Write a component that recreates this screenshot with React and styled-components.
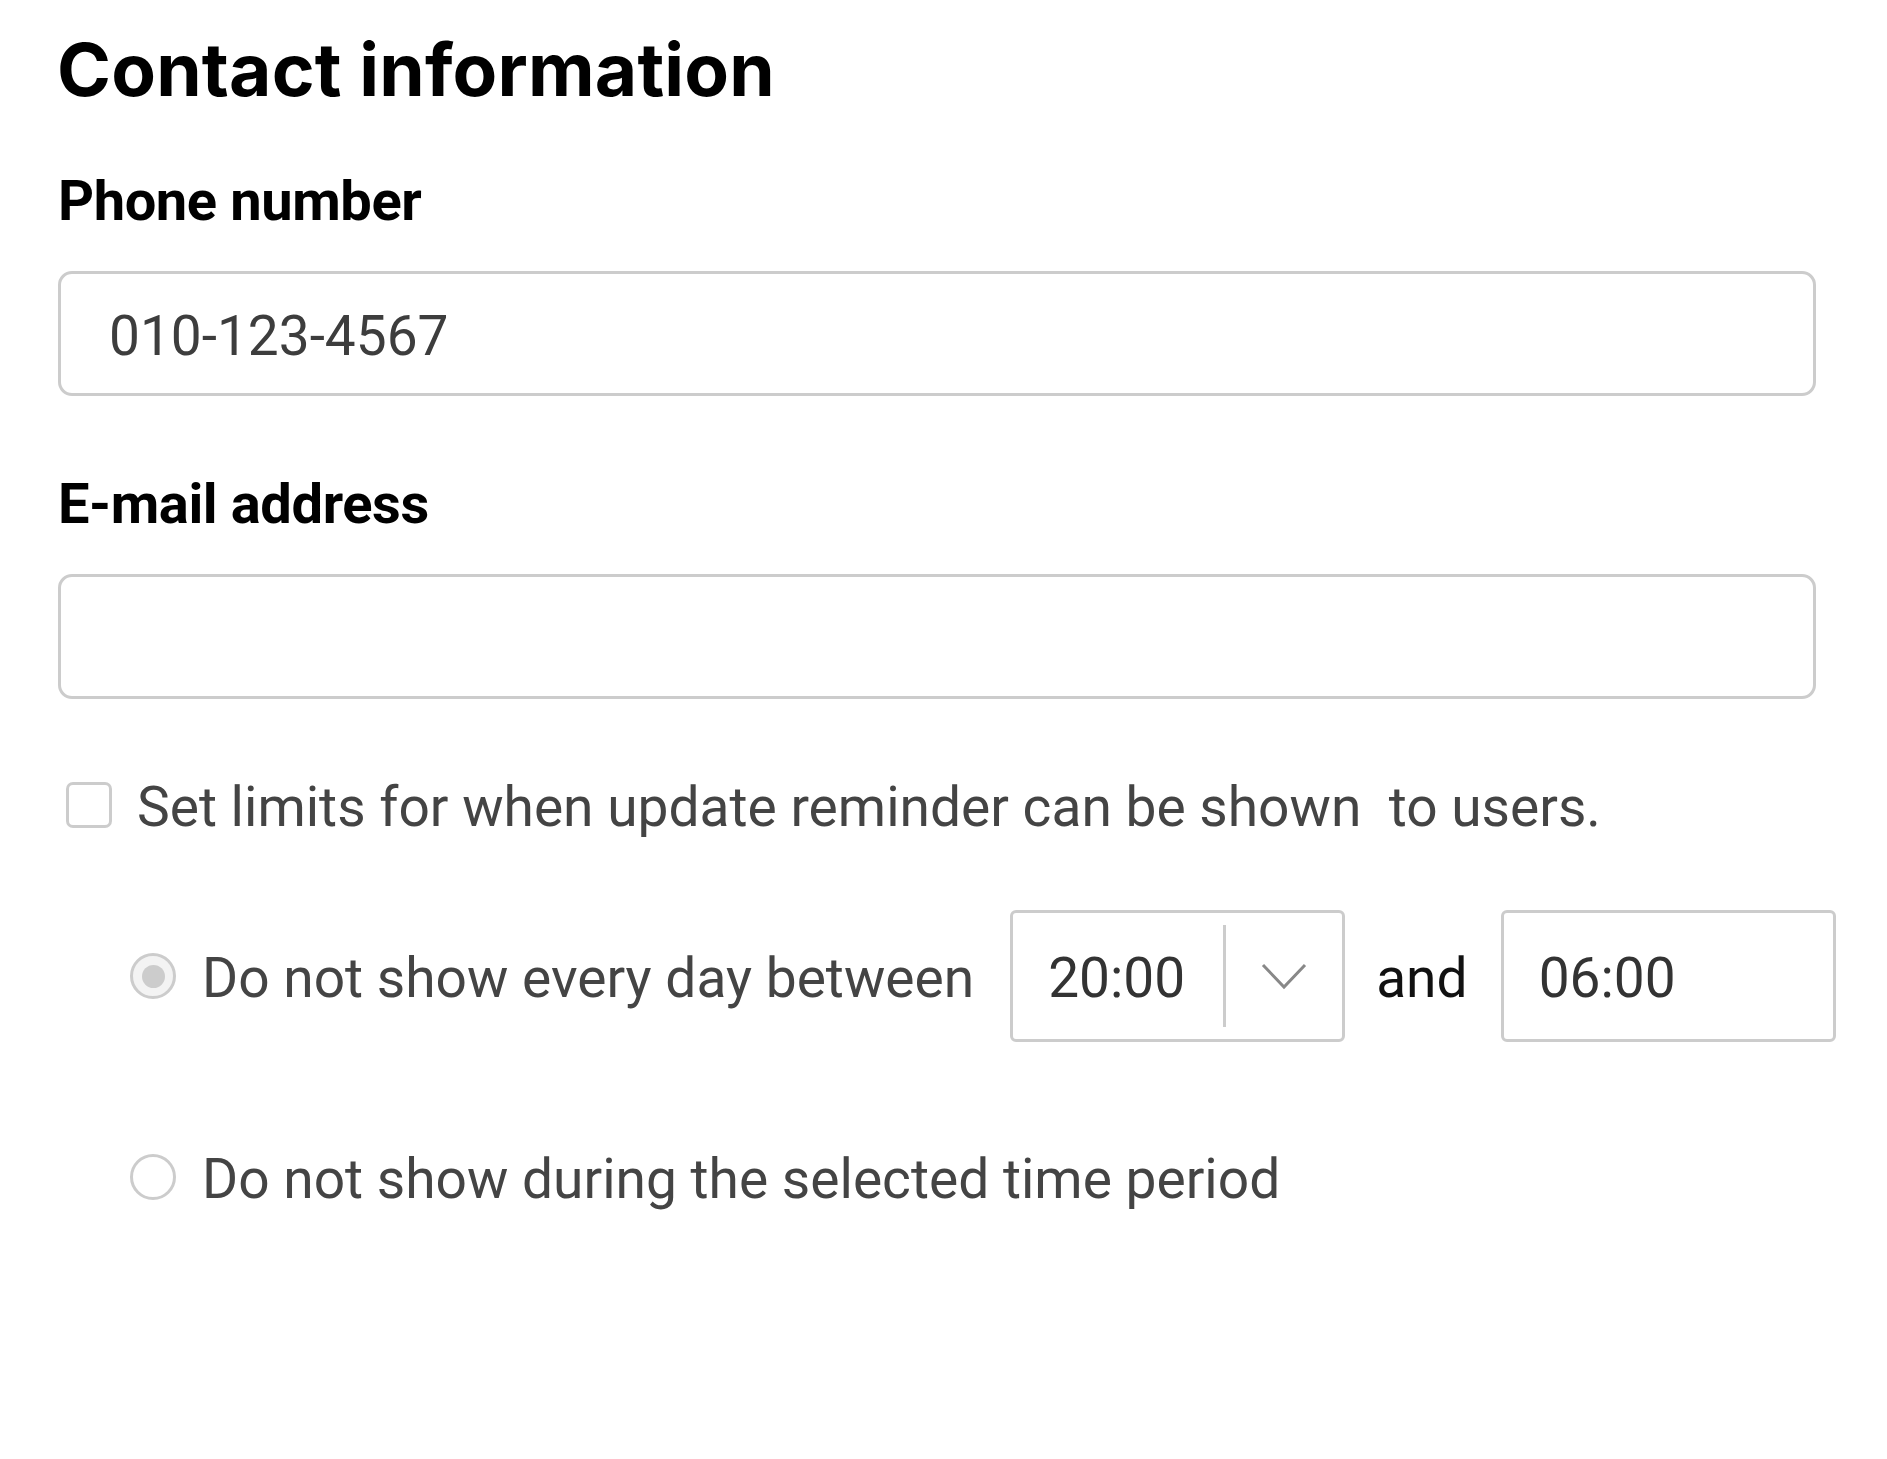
import React from "react";
import styled, { createGlobalStyle } from "styled-components";

const Global = createGlobalStyle`
  html, body { margin: 0; padding: 0; background: #ffffff; }
  body { font-family: Roboto, "Noto Sans", Arial, sans-serif; }
  * { box-sizing: border-box; }
`;

const Page = styled.div`
  width: 1887px;
  min-height: 1459px;
  padding: 34px 0 0 58px;
  display: flex;
  flex-direction: column;
  align-items: flex-start;
`;

const Title = styled.h1`
  margin: 0 0 0 -1px;
  font-family: Inter, "Liberation Sans", sans-serif;
  font-weight: 700;
  font-size: 73px;
  line-height: 72px;
  color: #000;
  letter-spacing: 0.2px;
`;

const Label = styled.label`
  display: block;
  margin: ${(p) => p.$top}px 0 42px 0;
  font-family: Roboto, sans-serif;
  font-weight: 700;
  font-size: 56px;
  line-height: 56px;
  color: #000;
  letter-spacing: -0.4px;
`;

const TextInput = styled.div`
  width: 1758px;
  height: 125px;
  border: 3px solid #cccccc;
  border-radius: 14px;
  display: flex;
  align-items: center;
  padding: 4px 0 0 48px;
  font-family: Roboto, sans-serif;
  font-weight: 400;
  font-size: 55px;
  color: #3d3d3d;
`;

const CheckRow = styled.div`
  margin: 83px 0 0 8px;
  display: flex;
  align-items: center;
  gap: 25px;
  height: 46px;
`;

const CheckBox = styled.span`
  width: 46px;
  height: 46px;
  border: 3px solid #cccccc;
  border-radius: 7px;
  background: #fff;
  flex: none;
`;

const OptionText = styled.span`
  font-family: Roboto, sans-serif;
  font-weight: 400;
  font-size: 55.1px;
  line-height: 46px;
  padding-top: 4px;
  color: ${(p) => (p.$dark ? "#111" : "#444")};
  white-space: pre;
`;

const RadioRow = styled.div`
  margin: ${(p) => p.$top}px 0 0 72px;
  display: flex;
  align-items: center;
  height: ${(p) => p.$h}px;
`;

const Radio = styled.span`
  width: 46px;
  height: 46px;
  border-radius: 50%;
  border: 3px solid #cccccc;
  background: ${(p) => (p.$checked ? "#f3f3f3" : "#fff")};
  display: flex;
  align-items: center;
  justify-content: center;
  margin-right: 26px;
  flex: none;
  &::after {
    content: "";
    display: ${(p) => (p.$checked ? "block" : "none")};
    width: 23px;
    height: 23px;
    border-radius: 50%;
    background: #cccccc;
  }
`;

const TimeBox = styled.div`
  width: 335px;
  height: 132px;
  border: 3px solid #cccccc;
  border-radius: 6px;
  display: flex;
  align-items: center;
  margin-left: ${(p) => p.$ml}px;
  padding-left: 35px;
  font-family: Roboto, sans-serif;
  font-size: 55px;
  color: #333;
  flex: none;
`;

const TimeValue = styled.span`
  padding-top: 4px;
  width: 140px;
`;

const Divider = styled.span`
  width: 3px;
  height: 102px;
  background: #cccccc;
  margin-left: 35px;
`;

const Chevron = styled.svg`
  margin-left: 35px;
  width: 46px;
  height: 28px;
`;

const And = styled(OptionText)`
  margin-left: 31px;
`;

export default function App() {
  return (
    <>
      <Global />
      <Page>
        <Title>Contact information</Title>
        <Label $top={67}>Phone number</Label>
        <TextInput>010-123-4567</TextInput>
        <Label $top={80}>E-mail address</Label>
        <TextInput />
        <CheckRow>
          <CheckBox />
          <OptionText>Set limits for when update reminder can be shown  to users.</OptionText>
        </CheckRow>
        <RadioRow $top={82} $h={132}>
          <Radio $checked />
          <OptionText>Do not show every day between</OptionText>
          <TimeBox $ml={36}>
            <TimeValue>20:00</TimeValue>
            <Divider />
            <Chevron viewBox="0 0 46 28">
              <polyline points="2,3 23,25 44,3" fill="none" stroke="#888" strokeWidth="3" />
            </Chevron>
          </TimeBox>
          <And $dark>and</And>
          <TimeBox $ml={33}>
            <TimeValue>06:00</TimeValue>
          </TimeBox>
        </RadioRow>
        <RadioRow $top={112} $h={46}>
          <Radio />
          <OptionText>Do not show during the selected time period</OptionText>
        </RadioRow>
      </Page>
    </>
  );
}
